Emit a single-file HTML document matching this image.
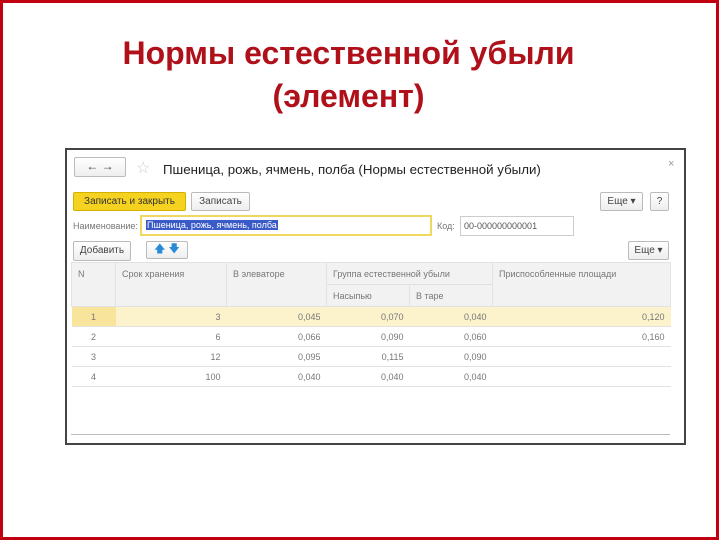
<!DOCTYPE html>
<html><head><meta charset="utf-8"><style>
*{margin:0;padding:0;box-sizing:border-box}
body{width:720px;height:540px;overflow:hidden;background:#fff;font-family:"Liberation Sans",sans-serif;position:relative}
.bord{position:absolute;left:0;top:0;width:719px;height:540px;border:3px solid #c00010}
.t{position:absolute;left:0;width:697px;text-align:center;color:#b0101a;font-weight:bold;font-size:32px}
.a{position:absolute}
.frame{position:absolute;left:65px;top:148px;width:621px;height:297px;border:2px solid #444;border-right-width:2px;background:#fff}
.btn{position:absolute;border:1px solid #bbb;border-radius:2px;background:linear-gradient(#fff,#eee);font-size:10px;color:#444;line-height:18px;text-align:center}
.s{font-size:9px;color:#777}
table{position:absolute;left:71px;top:262px;border-collapse:collapse;font-size:9px;color:#777}
td{border:1px solid #e2e2e2;padding:0 6px}
.h td{background:#f2f2f2;height:22px;vertical-align:middle}
.r td{height:20px;text-align:right;border-left:none;border-right:none}
</style></head><body>
<div class="bord"></div>
<div class="t" style="top:35px">Нормы естественной убыли</div>
<div class="t" style="top:78px">(элемент)</div>
<div class="frame"></div>
<div class="btn" style="left:74px;top:157px;width:52px;height:20px;font-size:12px;line-height:17px">&#8592; &#8594;</div>
<div class="a" style="left:136px;top:158px;color:#ccc;font-size:16px">☆</div>
<div class="a" style="left:163px;top:162px;font-size:13.3px;color:#222">Пшеница, рожь, ячмень, полба (Нормы естественной убыли)</div>
<div class="a" style="left:668px;top:158px;color:#999;font-size:11px">×</div>
<div class="btn" style="left:73px;top:192px;width:113px;height:19px;background:#f5d21f;border-color:#d4b000;color:#333">Записать и закрыть</div>
<div class="btn" style="left:191px;top:192px;width:59px;height:19px">Записать</div>
<div class="btn" style="left:600px;top:192px;width:43px;height:19px">Еще ▾</div>
<div class="btn" style="left:650px;top:192px;width:19px;height:19px">?</div>
<div class="a s" style="left:73px;top:221px">Наименование:</div>
<div class="a" style="left:140px;top:215px;width:292px;height:21px;border:2px solid #f0d860;background:#fff"><span style="position:absolute;left:4px;top:3px;font-size:9px;background:#3a5bc7;color:#fff;padding:0 1px">Пшеница, рожь, ячмень, полба</span></div>
<div class="a s" style="left:437px;top:221px">Код:</div>
<div class="a" style="left:460px;top:216px;width:114px;height:20px;border:1px solid #ccc;font-size:9px;color:#555;padding:4px 3px">00-000000000001</div>
<div class="btn" style="left:73px;top:241px;width:58px;height:20px">Добавить</div>
<div class="btn" style="left:146px;top:241px;width:42px;height:18px;color:#2a8ad6;font-size:11px;line-height:15px">🡅 🡇</div>
<div class="btn" style="left:628px;top:241px;width:41px;height:19px">Еще ▾</div>
<table>
<tr class="h"><td rowspan="2" style="width:44px;vertical-align:top;padding-top:6px">N</td><td rowspan="2" style="width:111px;vertical-align:top;padding-top:6px">Срок хранения</td><td rowspan="2" style="width:100px;vertical-align:top;padding-top:6px">В элеваторе</td><td colspan="2" style="width:166px">Группа естественной убыли</td><td rowspan="2" style="width:178px;vertical-align:top;padding-top:6px">Приспособленные площади</td></tr>
<tr class="h"><td style="width:83px">Насыпью</td><td style="width:83px">В таре</td></tr>
<tr class="r" style="background:#fcf3cc"><td style="text-align:center;background:#f8e49a">1</td><td>3</td><td>0,045</td><td>0,070</td><td>0,040</td><td>0,120</td></tr>
<tr class="r"><td style="text-align:center">2</td><td>6</td><td>0,066</td><td>0,090</td><td>0,060</td><td>0,160</td></tr>
<tr class="r"><td style="text-align:center">3</td><td>12</td><td>0,095</td><td>0,115</td><td>0,090</td><td></td></tr>
<tr class="r"><td style="text-align:center">4</td><td>100</td><td>0,040</td><td>0,040</td><td>0,040</td><td></td></tr>
</table>
<div class="a" style="left:71px;top:434px;width:599px;height:1px;background:#bbb"></div>
</body></html>
